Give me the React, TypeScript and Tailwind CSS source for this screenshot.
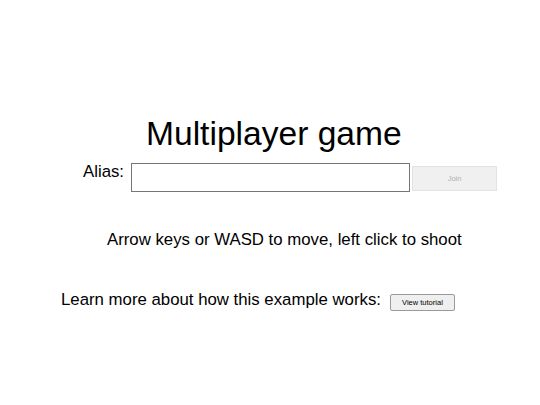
import React from "react";

export default function App() {
  return (
    <div className="w-[540px] h-[405px] bg-white text-black overflow-hidden" style={{ fontFamily: '"Liberation Sans", Arial, sans-serif' }}>
      <div className="flex flex-col pt-[114px]">
        <h1 className="pl-[146px] text-[33.6px] leading-[39px] font-normal whitespace-nowrap">Multiplayer game</h1>
        <div className="flex items-start pl-[83px] mt-[10px] h-[29px]">
          <span className="text-[16.8px] leading-[20px] mt-[-1px] whitespace-nowrap">Alias:</span>
          <input
            type="text"
            className="ml-[7px] w-[279px] h-[29px] border border-[#767676] bg-white outline-none px-1 text-[13px]"
          />
          <button
            disabled
            className="ml-[2px] mt-[3px] w-[85px] h-[25px] bg-[#f0f0f0] border border-[#e3e3e3] text-[#b0b0b0] text-[7.5px] leading-none"
          >
            Join
          </button>
        </div>
        <p className="pl-[107px] mt-[38px] text-[16.8px] leading-[20px] whitespace-nowrap">
          Arrow keys or WASD to move, left click to shoot
        </p>
        <div className="flex items-start pl-[61px] mt-[40px]">
          <span className="text-[16.8px] leading-[20px] whitespace-nowrap">Learn more about how this example works:</span>
          <button className="ml-[9px] mt-[4px] w-[65px] h-[17px] bg-[#efefef] border border-[#9a9a9a] rounded-[2px] text-[7.5px] leading-none text-black">
            View tutorial
          </button>
        </div>
      </div>
    </div>
  );
}
